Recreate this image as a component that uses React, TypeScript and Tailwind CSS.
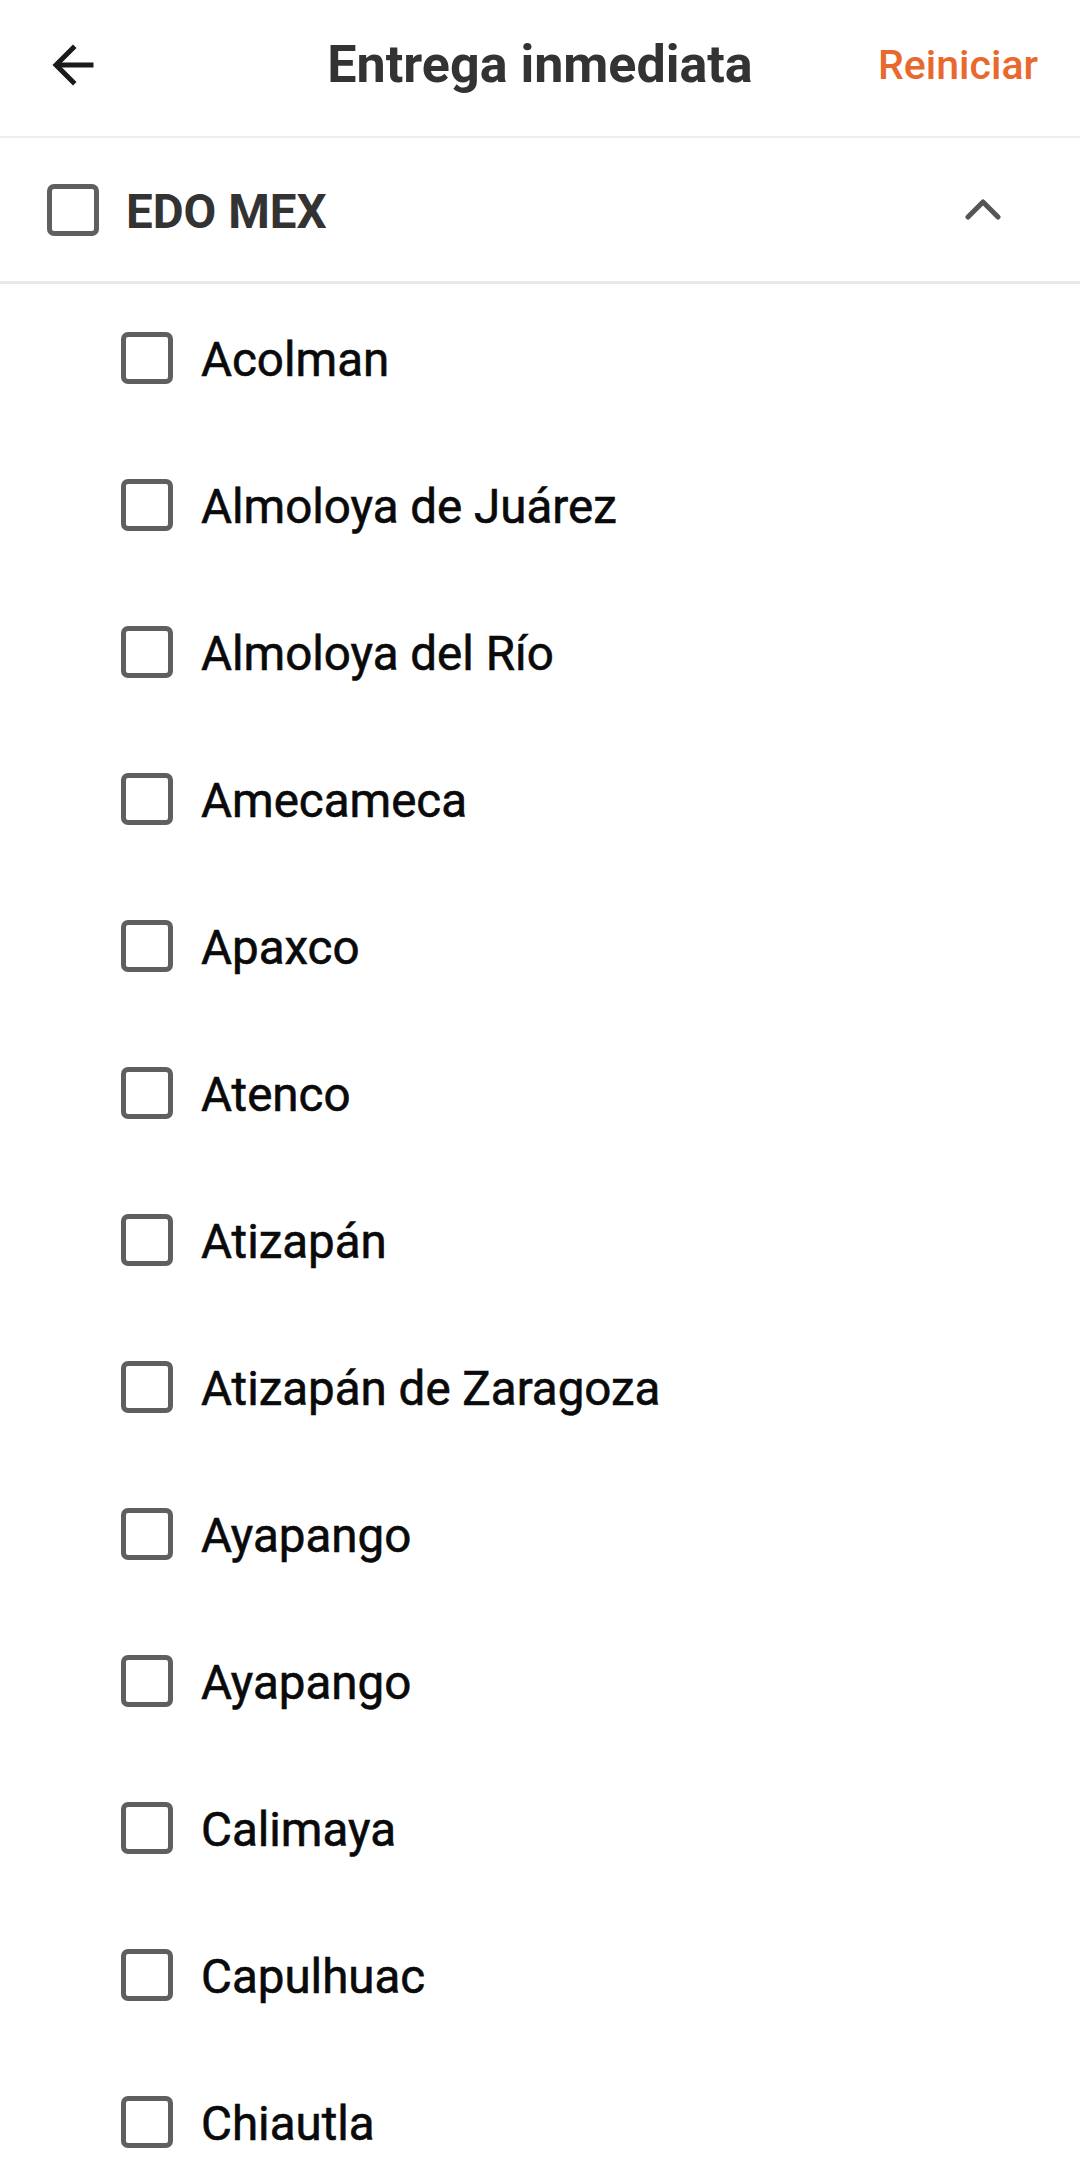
import React from 'react';

const towns = [
    'Acolman',
    'Almoloya de Juárez',
    'Almoloya del Río',
    'Amecameca',
    'Apaxco',
    'Atenco',
    'Atizapán',
    'Atizapán de Zaragoza',
    'Ayapango',
    'Ayapango',
    'Calimaya',
    'Capulhuac',
    'Chiautla',
];

const Box: React.FC = () => (
    <div className="w-[52px] h-[52px] shrink-0 rounded-[7px] border-[5px] border-[#5f5f5f] bg-white" />
);

export default function App() {
    return (
        <div className="w-[1080px] h-[2174px] overflow-hidden bg-white font-['Roboto',sans-serif]">
            {/* Top bar */}
            <div className="relative h-[138px] flex items-center justify-center border-b-2 border-[#efefef]">
                <button className="absolute left-[50px] top-[42px] w-[46px] h-[46px] flex items-center justify-center">
                    <svg width="46" height="46" viewBox="0 0 46 46" fill="none" stroke="#1a1a1a" strokeWidth="5" strokeLinecap="square">
                        <path d="M41 23H8" />
                        <path d="M23 6L6 23l17 17" />
                    </svg>
                </button>
                <h1 className="text-[52px] font-bold text-[#333333] leading-none -mt-[6px]">Entrega inmediata</h1>
                <span className="absolute right-[42px] top-[45px] text-[41px] font-medium text-[#e8692e] leading-none">Reiniciar</span>
            </div>

            {/* Section header */}
            <div className="h-[146px] flex items-center pl-[47px] pr-[79px] border-b-[3px] border-[#e8e8e8]">
                <Box />
                <span className="ml-[27px] mt-[6px] text-[47.5px] font-bold text-[#333333] leading-none">EDO MEX</span>
                <div className="flex-1" />
                <svg width="36" height="24" viewBox="0 0 36 24" fill="none" stroke="#555555" strokeWidth="5" strokeLinecap="round" strokeLinejoin="round">
                    <path d="M3 19L18 4l15 15" />
                </svg>
            </div>

            {/* Towns */}
            <div>
                {towns.map((t, i) => (
                    <div key={i} className="h-[147px] flex items-center pl-[121px]">
                        <Box />
                        <span className="ml-[28px] mt-[6px] text-[47.5px] text-[#0a0a0a] leading-none [-webkit-text-stroke:0.6px_#0a0a0a]">{t}</span>
                    </div>
                ))}
            </div>
        </div>
    );
}
